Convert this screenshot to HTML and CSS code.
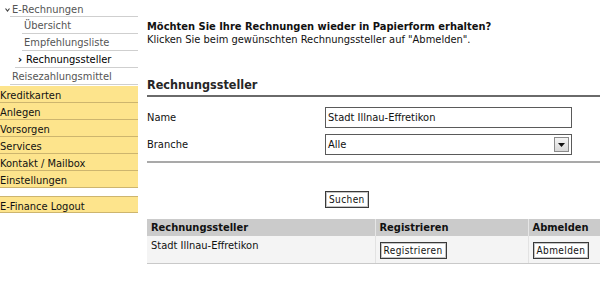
FILE: index.html
```html
<!DOCTYPE html>
<html lang="de">
<head>
<meta charset="utf-8">
<link rel="stylesheet" href="styles.css">
</head>
<body>
<div class="page">
  <nav class="sidebar">
    <div class="sub sub-top"><svg class="chev" width="5" height="4" viewBox="0 0 5 4"><path d="M0.5 0.5L2.5 3L4.5 0.5" fill="none" stroke="#444" stroke-width="1.2"/></svg>E-Rechnungen</div>
    <div class="sub sub-2">Übersicht</div>
    <div class="sub sub-2">Empfehlungsliste</div>
    <div class="sub sub-2 active"><span class="arrow">&#8250;</span>Rechnungssteller</div>
    <div class="sub sub-1">Reisezahlungsmittel</div>
    <div class="main-item">Kreditkarten</div>
    <div class="main-item">Anlegen</div>
    <div class="main-item">Vorsorgen</div>
    <div class="main-item">Services</div>
    <div class="main-item">Kontakt / Mailbox</div>
    <div class="main-item">Einstellungen</div>
    <div class="main-item logout">E-Finance Logout</div>
  </nav>
  <main class="content">
    <p class="intro"><strong>Möchten Sie Ihre Rechnungen wieder in Papierform erhalten?</strong><br>Klicken Sie beim gewünschten Rechnungssteller auf "Abmelden".</p>
    <h2 class="section-title">Rechnungssteller</h2>
    <div class="form">
      <div class="form-row">
        <label class="form-label">Name</label>
        <div class="field input-field">Stadt Illnau-Effretikon</div>
      </div>
      <div class="form-row">
        <label class="form-label">Branche</label>
        <div class="field select-field"><span>Alle</span><span class="drop"><svg width="7" height="4" viewBox="0 0 7 4"><path d="M0 0H7L3.5 4Z" fill="#111"/></svg></span></div>
      </div>
    </div>
    <div class="search-row"><button class="btn">Suchen</button></div>
    <table class="results">
      <thead>
        <tr><th class="c1">Rechnungssteller</th><th class="c2">Registrieren</th><th class="c3">Abmelden</th></tr>
      </thead>
      <tbody>
        <tr><td class="c1">Stadt Illnau-Effretikon</td><td class="c2"><button class="btn">Registrieren</button></td><td class="c3"><button class="btn">Abmelden</button></td></tr>
      </tbody>
    </table>
  </main>
</div>
</body>
</html>
```
FILE: styles.css
```css
* { box-sizing: border-box; }
html, body { margin: 0; padding: 0; background: #fff; }
body {
  font-family: "DejaVu Sans Condensed", "DejaVu Sans", sans-serif;
  font-size: 11px;
  color: #111;
  width: 600px;
  height: 294px;
  overflow: hidden;
}
.page { display: flex; align-items: flex-start; }
.sidebar { width: 138px; flex: none; display: flex; flex-direction: column; }
.sub {
  height: 17px;
  padding-top: 1px;
  line-height: 16px;
  color: #555;
  border-bottom: 1px solid #cfcfcf;
  white-space: nowrap;
}
.sub-top { margin-left: 10px; padding-left: 2px; padding-top: 2px; position: relative; }
.chev { position: absolute; left: -5px; top: 8px; }
.sub-2 { margin-left: 22px; padding-left: 2px; }
.sub-1 { margin-left: 10px; padding-left: 2px; margin-bottom: 1px; }
.active { color: #000; padding-left: 3px; margin-left: 15px; }
.arrow { font-weight: bold; margin-right: 4px; font-size: 11px; }
.main-item {
  height: 17px;
  padding-top: 2px;
  line-height: 16px;
  background: #fde48c;
  border-bottom: 1px solid #cdb56e;
  color: #111;
  white-space: nowrap;
}
.main-item:first-of-type { border-top: 1px solid #cdb56e; }
.logout { margin-top: 8px; border-top: 1px solid #cdb56e; }
.content { flex: 1; padding-left: 9px; }
.intro { margin: 20px 0 0; line-height: 13px; }
.intro strong { font-weight: bold; }
.section-title {
  margin: 30px 0 0;
  font-size: 12.5px;
  font-weight: bold;
  color: #262626;
  line-height: 18px;
  padding-bottom: 1px;
  border-bottom: 2px solid #6a6a6a;
}
.form { padding-top: 10px; padding-bottom: 6px; border-bottom: 2px solid #a9a9a9; }
.form-row { display: flex; align-items: center; height: 21px; margin-bottom: 6px; }
.form-row:last-child { margin-bottom: 0; }
.form-label { width: 178px; flex: none; }
.field {
  width: 247px;
  height: 21px;
  border: 1px solid #5a5a5a;
  display: flex;
  align-items: center;
  padding-left: 2px;
  background: #fff;
}
.select-field { justify-content: space-between; padding-right: 2px; }
.drop {
  width: 15px;
  height: 15px;
  border: 1px solid #8a8a8a;
  background: linear-gradient(#f4f4f4, #d8d8d8);
  display: flex;
  align-items: center;
  justify-content: center;
}
.search-row { padding: 28px 0 0 178px; }
.btn {
  font-family: inherit;
  font-size: 10px;
  letter-spacing: 0.4px;
  background: #fff;
  border: 1px solid #3a3a3a;
  outline: 1px solid #c4c4c4;
  outline-offset: -2px;
  padding: 0 3px;
  height: 17px;
  line-height: 14px;
  color: #111;
  margin: 0;
}
.results { width: 100%; border-collapse: collapse; margin-top: 11px; }
.results th {
  background: #cbcbcb;
  text-align: left;
  font-weight: bold;
  height: 17px;
  padding: 0 4px;
  border-right: 1px solid #e6e6e6;
}
.results td {
  background: #f4f4f4;
  vertical-align: top;
  padding: 3px 4px 0;
  height: 27px;
  border-right: 1px solid #e2e2e2;
  border-bottom: 1px solid #c9c9c9;
}
.results td .btn { margin-top: 3px; }
.results .c3 { border-right: none; }
.c1 { width: 228px; }
.c2 { width: 153px; }
```
